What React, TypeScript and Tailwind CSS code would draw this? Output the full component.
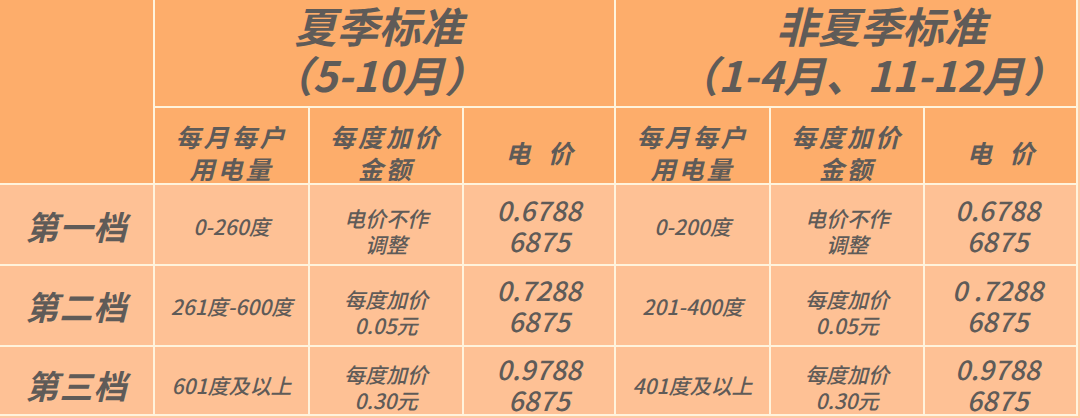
import React from "react";

const H = "bg-[#fdad6b]";
const B = "bg-[#fec195]";

type Row = {
  tier: string;
  s1: string;
  s2: string[];
  s3: string[];
  w1: string;
  w2: string[];
  w3: string[];
  pt: string;
};

const rows: Row[] = [
  {
    tier: "第一档",
    s1: "0-260度",
    s2: ["电价不作", "调整"],
    s3: ["0.6788", "6875"],
    w1: "0-200度",
    w2: ["电价不作", "调整"],
    w3: ["0.6788", "6875"],
    pt: "pt-[2px]",
  },
  {
    tier: "第二档",
    s1: "261度-600度",
    s2: ["每度加价", "0.05元"],
    s3: ["0.7288", "6875"],
    w1: "201-400度",
    w2: ["每度加价", "0.05元"],
    w3: ["0 .7288", "6875"],
    pt: "pt-[0px]",
  },
  {
    tier: "第三档",
    s1: "601度及以上",
    s2: ["每度加价", "0.30元"],
    s3: ["0.9788", "6875"],
    w1: "401度及以上",
    w2: ["每度加价", "0.30元"],
    w3: ["0.9788", "6875"],
    pt: "pt-[8px]",
  },
];

function Cell({
  className = "",
  children,
}: {
  className?: string;
  children: React.ReactNode;
}) {
  return (
    <div
      className={`flex flex-col items-center justify-center text-center ${className}`}
    >
      {children}
    </div>
  );
}

export default function App() {
  return (
    <div className="w-[1080px] h-[418px] bg-[#fecaa4] overflow-hidden font-['Noto_Sans_CJK_SC',sans-serif] italic text-[#5f5b58]">
      <div className="grid w-[1078px] grid-cols-[153px_153px_152px_150px_153px_152px_151px] grid-rows-[106px_75px_79px_79px_67px] gap-[2px] bg-[#fff3dc] pr-[2px] pb-[2px]">
        <div className={`${H} row-span-2`} />
        <Cell className={`${H} col-span-3 text-[42px] font-bold leading-[49px] pb-[8px] pr-[12px]`}>
          <div>夏季标准</div>
          <div>（5-10月）</div>
        </Cell>
        <Cell className={`${H} col-span-3 text-[42px] font-bold leading-[49px] pb-[8px] pl-[50px]`}>
          <div className="pl-[20px]">非夏季标准</div>
          <div>（1-4月、11-12月）</div>
        </Cell>

        {[0, 1].map((k) => (
          <React.Fragment key={k}>
            <Cell className={`${H} pt-[13px] text-[25px] font-semibold leading-[32px] tracking-[3px]`}>
              <div>每月每户</div>
              <div>用电量</div>
            </Cell>
            <Cell className={`${H} pt-[13px] text-[25px] font-semibold leading-[32px] tracking-[3px]`}>
              <div>每度加价</div>
              <div>金额</div>
            </Cell>
            <Cell className={`${H} pt-[13px] text-[25px] font-semibold leading-[32px]`}>
              <div className="tracking-[6px] pl-[6px]">电 价</div>
            </Cell>
          </React.Fragment>
        ))}

        {rows.map((r) => (
          <React.Fragment key={r.tier}>
            <Cell className={`${B} ${r.pt} text-[33px] font-bold leading-[40px] tracking-[1px]`}>
              {r.tier}
            </Cell>
            <Cell className={`${B} ${r.pt} text-[21px] font-medium leading-[28px]`}>
              {r.s1}
            </Cell>
            <Cell className={`${B} ${r.pt} pt-[12px] text-[21px] font-medium leading-[26px]`}>
              <div>{r.s2[0]}</div>
              <div>{r.s2[1]}</div>
            </Cell>
            <Cell className={`${B} ${r.pt} pb-[2px] text-[27px] font-medium leading-[31px]`}>
              <div>{r.s3[0]}</div>
              <div>{r.s3[1]}</div>
            </Cell>
            <Cell className={`${B} ${r.pt} text-[21px] font-medium leading-[28px]`}>
              {r.w1}
            </Cell>
            <Cell className={`${B} ${r.pt} pt-[12px] text-[21px] font-medium leading-[26px]`}>
              <div>{r.w2[0]}</div>
              <div>{r.w2[1]}</div>
            </Cell>
            <Cell className={`${B} ${r.pt} pb-[2px] text-[27px] font-medium leading-[31px] pr-[6px]`}>
              <div>{r.w3[0]}</div>
              <div>{r.w3[1]}</div>
            </Cell>
          </React.Fragment>
        ))}
      </div>
    </div>
  );
}
